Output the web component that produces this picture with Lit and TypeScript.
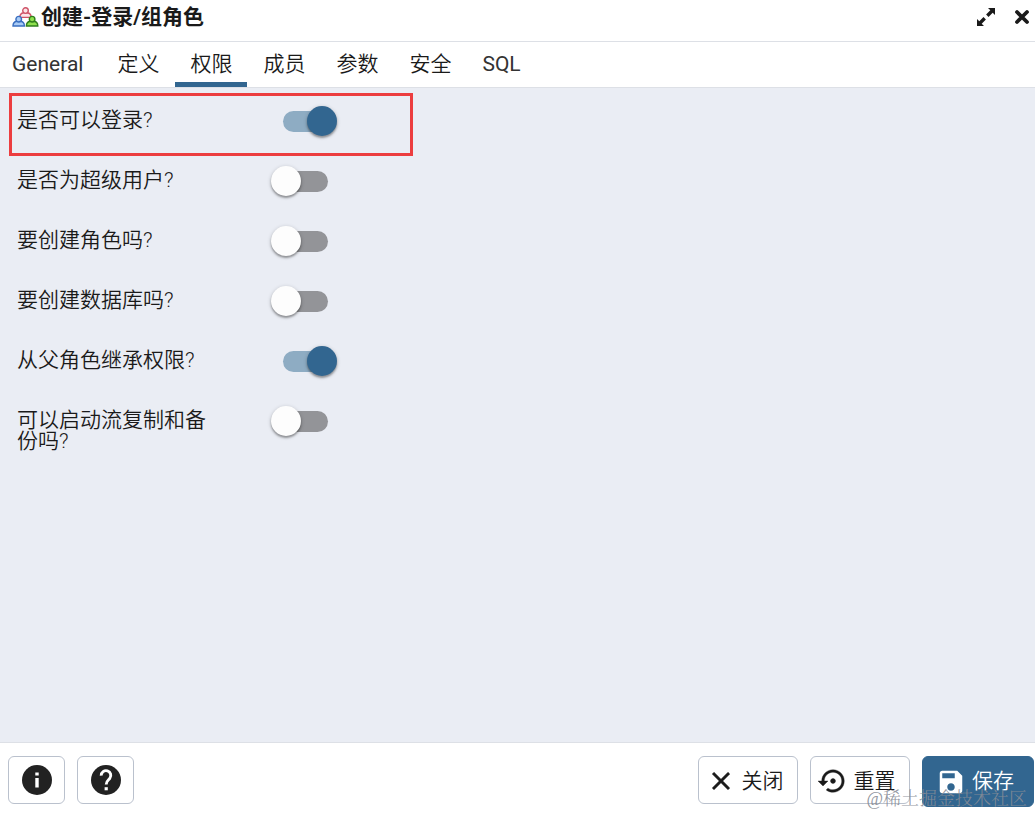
import { LitElement, html, css, svg } from "lit";
import { customElement, state } from "lit/decorators.js";
import { classMap } from "lit/directives/class-map.js";

const person = (cls: string, x: number, y: number) => svg`
  <g class=${cls} transform="translate(${x} ${y})">
    <path d="M0.8 10.4 C0.8 7.4 2.6 6 4.6 5.7 L8.4 5.7 C10.4 6 12.2 7.4 12.2 10.4 Z"/>
    <circle cx="6.5" cy="3.6" r="2.8"/>
  </g>`;

const icons = {
  group: html`<svg class="group" width="27" height="20" viewBox="0 0 27 20" aria-hidden="true">
    ${person("red", 7, 0)}${person("blue", 0.2, 8.6)}${person("green", 13.6, 8.6)}
  </svg>`,
  expand: html`<svg width="20" height="20" viewBox="0 0 20 20" aria-hidden="true">
    <path d="M12 1h7v7l-2.3-2.3-4.2 4.2-2.4-2.4 4.2-4.2zM1 12l2.3 2.3 4.2-4.2 2.4 2.4-4.2 4.2L8 19H1z" fill="currentColor"/>
  </svg>`,
  times: html`<svg width="16" height="16" viewBox="0 0 16 16" aria-hidden="true">
    <path d="M3 3l10 10M13 3L3 13" stroke="currentColor" stroke-width="3.8" stroke-linecap="round"/>
  </svg>`,
  info: html`<svg width="30" height="30" viewBox="0 0 30 30" aria-hidden="true">
    <circle cx="15" cy="15" r="15" fill="#222"/>
    <path d="M13.3 7.5h3.4v3h-3.4zM13.3 13h3.4v9.5h-3.4z" fill="#fff"/>
  </svg>`,
  help: html`<svg width="30" height="30" viewBox="0 0 30 30" aria-hidden="true">
    <circle cx="15" cy="15" r="15" fill="#222"/>
    <path d="M10.2 10.6a4.8 4.8 0 1 1 8.6 2.8c-1.4 1.8-3.6 2.6-3.6 6" fill="none" stroke="#fff" stroke-width="2.9"/>
    <path d="M13.6 22.2h3.2v3.1h-3.2z" fill="#fff"/>
  </svg>`,
  close: html`<svg width="30" height="30" viewBox="0 0 24 24" aria-hidden="true">
    <path d="M19 6.41 17.59 5 12 10.59 6.41 5 5 6.41 10.59 12 5 17.59 6.41 19 12 13.41 17.59 19 19 17.59 13.41 12z" fill="currentColor" stroke="currentColor" stroke-width=".4"/>
  </svg>`,
  reset: html`<svg width="30" height="30" viewBox="0 0 24 24" aria-hidden="true">
    <path d="M14 12c0-1.1-.9-2-2-2s-2 .9-2 2 .9 2 2 2 2-.9 2-2zm-2-9c-4.97 0-9 4.03-9 9H0l4 4 4-4H5c0-3.87 3.13-7 7-7s7 3.13 7 7-3.13 7-7 7c-1.51 0-2.91-.49-4.06-1.3l-1.42 1.44C8.04 20.3 9.94 21 12 21c4.97 0 9-4.03 9-9s-4.03-9-9-9z" fill="currentColor" stroke="currentColor" stroke-width=".3"/>
  </svg>`,
  save: html`<svg width="30" height="30" viewBox="0 0 24 24" aria-hidden="true">
    <path d="M17 3H5c-1.11 0-2 .9-2 2v14c0 1.1.89 2 2 2h14c1.1 0 2-.9 2-2V7l-4-4zm-5 16c-1.66 0-3-1.34-3-3s1.34-3 3-3 3 1.34 3 3-1.34 3-3 3zm3-10H5V5h10v4z" fill="currentColor"/>
  </svg>`,
};

interface Privilege {
  id: string;
  label: string;
  on: boolean;
  marked?: boolean;
}

@customElement("app-root")
export class AppRoot extends LitElement {
  @state() private tab = "权限";
  @state() private privileges: Privilege[] = [
    { id: "login", label: "是否可以登录?", on: true, marked: true },
    { id: "super", label: "是否为超级用户?", on: false },
    { id: "role", label: "要创建角色吗?", on: false },
    { id: "db", label: "要创建数据库吗?", on: false },
    { id: "inherit", label: "从父角色继承权限?", on: true },
    { id: "replication", label: "可以启动流复制和备份吗?", on: false },
  ];

  static styles = css`
    :host {
      display: flex;
      flex-direction: column;
      position: relative;
      min-height: 100vh;
      box-sizing: border-box;
      background: #fff;
      color: #1a1a1a;
      font: 350 21px/21px Roboto, "Noto Sans CJK SC", sans-serif;
    }
    *, *::before, *::after { box-sizing: border-box; }
    button { font: inherit; color: inherit; margin: 0; cursor: pointer; }
    svg { display: block; flex: none; }
    .header {
      display: flex;
      align-items: center;
      height: 42px;
      padding: 0 5px 8px 12px;
      border-bottom: 1px solid #dde0e6;
    }
    .title { flex: 1; margin: 0 0 0 2px; font-size: 21px; font-weight: 700; line-height: 22px; }
    .tools { display: flex; align-items: center; gap: 18px; }
    .tools button { padding: 0; border: 0; background: none; }
    .group g { stroke-width: 1.4; }
    .red { fill: #fbe4e8; stroke: #cf5468; }
    .blue { fill: #a9cbf5; stroke: #3a6fc0; }
    .green { fill: #8fe04e; stroke: #2f7d1c; }
    .tabs { display: flex; gap: 1px; height: 46px; border-bottom: 1px solid #dde0e6; }
    .tab {
      padding: 4px 15px 0;
      border: 0;
      border-bottom: 5px solid transparent;
      background: none;
      white-space: nowrap;
    }
    .tab.latin { font-weight: 400; color: #333; }
    .tab:first-child { padding-left: 12px; padding-right: 18px; }
    .tab.active { border-bottom-color: #326690; }
    .panel {
      flex: 1;
      padding: 4px 8px;
      background: #eaedf4;
      border-bottom: 1px solid #dde0e6;
    }
    .row {
      position: relative;
      display: grid;
      grid-template-columns: 200px 66px;
      column-gap: 54px;
      align-items: start;
      height: 60px;
      padding: 14px 9px 0;
    }
    .row label { padding-top: 4px; }
    .marked::after {
      content: "";
      position: absolute;
      top: 1px;
      left: 1px;
      width: 404px;
      height: 63px;
      border: 3px solid #ec3d3f;
      pointer-events: none;
    }
    .switch {
      appearance: none;
      display: flex;
      align-items: center;
      width: 66px;
      height: 30px;
      margin: 0;
      padding: 0 9px 0 12px;
      cursor: pointer;
    }
    .switch::before { content: ""; flex: 1; height: 21px; border-radius: 11px; background: #939498; }
    .switch::after {
      content: "";
      position: absolute;
      width: 30px;
      height: 30px;
      margin-left: -12px;
      border-radius: 50%;
      background: #fdfdfd;
      box-shadow: 0 2px 2px rgba(0, 0, 0, 0.3), 0 1px 4px rgba(0, 0, 0, 0.2);
    }
    .switch:checked::before { background: #8eacc3; }
    .switch:checked::after { margin-left: 24px; background: #326690; }
    .footer { display: flex; align-items: flex-start; gap: 12px; height: 72px; padding: 13px 1px 0 8px; }
    .btn {
      display: flex;
      align-items: center;
      justify-content: center;
      gap: 6px;
      height: 48px;
      padding: 2px 12px 0 5px;
      border: 1px solid #bac1cd;
      border-radius: 6px;
      background: #fff;
      white-space: nowrap;
    }
    .icon { width: 57px; padding: 0; }
    .spacer { flex: 1; }
    .wide { min-width: 100px; }
    .primary { height: 51px; padding: 0 19px 0 13px; border-color: #326690; background: #326690; color: #fff; }
    .watermark {
      position: absolute;
      right: 8px;
      bottom: 5px;
      font: 350 18px/22px "Liberation Serif", "Noto Serif CJK SC", "Noto Sans CJK SC", serif;
      color: rgba(135, 140, 150, 0.9);
      pointer-events: none;
    }
  `;

  private toggle(id: string) {
    this.privileges = this.privileges.map((p) => (p.id === id ? { ...p, on: !p.on } : p));
  }

  render() {
    const tabs = ["General", "定义", "权限", "成员", "参数", "安全", "SQL"];
    return html`
      <header class="header">
        ${icons.group}
        <h1 class="title">创建-登录/组角色</h1>
        <div class="tools">
          <button aria-label="最大化">${icons.expand}</button>
          <button aria-label="关闭窗口">${icons.times}</button>
        </div>
      </header>
      <nav class="tabs" role="tablist">
        ${tabs.map(
          (t) => html`<button
            role="tab"
            aria-selected=${t === this.tab}
            class=${classMap({ tab: true, active: t === this.tab, latin: /^[A-Z]/.test(t) })}
            @click=${() => (this.tab = t)}
          >${t}</button>`
        )}
      </nav>
      <main class="panel">
        ${this.privileges.map(
          (p) => html`<div class=${classMap({ row: true, marked: !!p.marked })}>
            <label for=${p.id}>${p.label}</label>
            <input class="switch" type="checkbox" role="switch" id=${p.id} .checked=${p.on} @change=${() => this.toggle(p.id)} />
          </div>`
        )}
      </main>
      <footer class="footer">
        <button class="btn icon" aria-label="信息">${icons.info}</button>
        <button class="btn icon" aria-label="帮助">${icons.help}</button>
        <span class="spacer"></span>
        <button class="btn wide">${icons.close}关闭</button>
        <button class="btn wide">${icons.reset}重置</button>
        <button class="btn primary">${icons.save}保存</button>
      </footer>
      <div class="watermark">@稀土掘金技术社区</div>
    `;
  }
}
